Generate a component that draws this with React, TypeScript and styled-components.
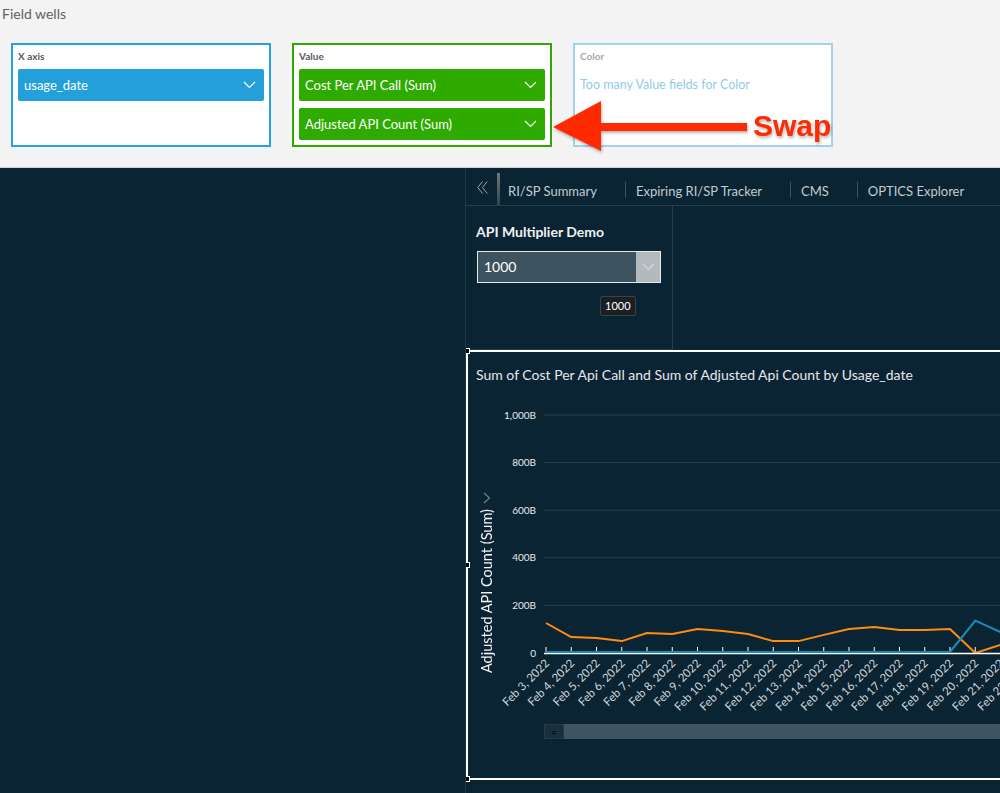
import React from "react";
import styled, { createGlobalStyle } from "styled-components";

const GlobalStyle = createGlobalStyle`
  *, *::before, *::after { box-sizing: border-box; }
  html, body { margin: 0; padding: 0; }
  body {
    width: 1000px;
    height: 793px;
    overflow: hidden;
    background: #0b2434;
    font-family: Lato, "Open Sans", sans-serif;
  }
`;

const Page = styled.div`
  position: relative;
  width: 1000px;
  height: 793px;
  display: flex;
  flex-direction: column;
  overflow: hidden;
`;

/* ---------- field wells ---------- */

const FieldWellsPanel = styled.section`
  height: 168px;
  flex-shrink: 0;
  background: #f3f3f3;
  border-bottom: 1px solid #cfd2d4;
  padding-top: 5px;
`;

const PanelTitle = styled.div`
  padding-left: 2px;
  font-size: 14px;
  line-height: 17px;
  color: #5f6266;
`;

const WellsRow = styled.div`
  display: flex;
  gap: 21px;
  margin-top: 21px;
  padding-left: 11px;
`;

const Well = styled.div<{ $border: string }>`
  width: 260px;
  height: 104px;
  background: #fff;
  border: 2px solid ${({ $border }) => $border};
  padding: 5px;
  display: flex;
  flex-direction: column;
  gap: 7px;
`;

const WellLabel = styled.div<{ $muted?: boolean }>`
  font-size: 10px;
  font-weight: 700;
  line-height: 12px;
  color: ${({ $muted }) => ($muted ? "#a7a9ab" : "#545b64")};
`;

const Pill = styled.div<{ $bg: string }>`
  height: 32px;
  border-radius: 2px;
  background: ${({ $bg }) => $bg};
  color: #fff;
  font-size: 13px;
  display: flex;
  align-items: center;
  justify-content: space-between;
  padding: 0 8px 0 6px;
`;

const Hint = styled.div`
  line-height: 32px;
  font-size: 12.5px;
  color: #8fcbe9;
`;

const SwapNote = styled.div`
  position: absolute;
  left: 553px;
  top: 101px;
  height: 50px;
  display: flex;
  align-items: center;
  gap: 6px;
  filter: drop-shadow(1px 2px 1.5px rgba(0, 0, 0, 0.3));
`;

const SwapText = styled.span`
  font-family: "Liberation Sans", Arial, sans-serif;
  font-weight: 700;
  font-size: 30px;
  line-height: 1;
  color: #ff2a00;
`;

/* ---------- dashboard ---------- */

const Dashboard = styled.div`
  flex: 1;
  display: flex;
  min-height: 0;
`;

const SidePane = styled.div`
  width: 466px;
  flex-shrink: 0;
  border-right: 1px solid #1e3949;
`;

const MainPane = styled.div`
  flex: 1;
  min-width: 0;
  display: flex;
  flex-direction: column;
  overflow: hidden;
`;

const TabBar = styled.div`
  height: 38px;
  flex-shrink: 0;
  display: flex;
  align-items: center;
  padding-top: 6px;
  border-bottom: 1px solid #23404f;
  white-space: nowrap;

  & > * {
    flex-shrink: 0;
  }
`;

const Collapse = styled.span`
  width: 31px;
  padding-left: 11px;
  display: flex;
  margin-top: -4px;
`;

const ActiveMark = styled.span`
  align-self: stretch;
  width: 3px;
  margin-top: -1px;
  background: linear-gradient(#6c7a82, #33444e);
`;

const Tab = styled.span<{ $first?: boolean }>`
  padding: 3px 28px 0 ${({ $first }) => ($first ? "8px" : "10px")};
  font-size: 13px;
  color: #c3cbd0;
`;

const Divider = styled.span`
  width: 1px;
  height: 16px;
  background: #3b5462;
`;

const ControlCard = styled.div`
  position: relative;
  width: 207px;
  height: 144px;
  flex-shrink: 0;
  border-right: 1px solid #23404f;
  border-bottom: 1px solid #23404f;
  padding: 17px 0 0 10px;
`;

const CardTitle = styled.div`
  font-size: 14px;
  font-weight: 700;
  line-height: 18px;
  color: #eef1f3;
`;

const Select = styled.div`
  margin: 10px 0 0 1px;
  width: 184px;
  height: 32px;
  display: flex;
  border: 1px solid #e6e9eb;
  background: #3e5360;
`;

const SelectValue = styled.span`
  flex: 1;
  padding-left: 6px;
  font-size: 14px;
  line-height: 30px;
  color: #fff;
`;

const SelectButton = styled.span`
  width: 24px;
  background: #b2babe;
  display: flex;
  align-items: center;
  justify-content: center;
`;

const Tooltip = styled.div`
  position: absolute;
  left: 134px;
  top: 90px;
  padding: 0 4px;
  height: 20px;
  line-height: 18px;
  font-size: 11px;
  color: #fff;
  background: #1b1f24;
  border: 1px solid #3c4248;
  border-radius: 2px;
`;

const Visual = styled.div`
  position: relative;
  width: 640px;
  height: 430px;
  flex-shrink: 0;
  border: 2px solid #fff;
`;

const Handle = styled.span<{ $pos: "top" | "mid" | "bottom" }>`
  position: absolute;
  left: -4px;
  width: 6px;
  height: 6px;
  background: #000;
  border: 1.5px solid #fff;
  top: ${({ $pos }) =>
    $pos === "top" ? "-4px" : $pos === "mid" ? "calc(50% - 3px)" : "calc(100% - 2px)"};
`;

const VisualTitle = styled.div`
  padding: 14px 0 0 8px;
  font-size: 14px;
  line-height: 18px;
  color: #e4e8eb;
  white-space: nowrap;
`;

const ChartBody = styled.div`
  display: flex;
  margin-top: 11px;
`;

const AxisTitleCol = styled.div`
  width: 37px;
  flex-shrink: 0;
  display: flex;
  flex-direction: column;
  align-items: center;
  gap: 5px;
  padding-top: 97px;
`;

const AxisTitle = styled.span`
  writing-mode: vertical-rl;
  transform: rotate(180deg);
  font-size: 14.5px;
  line-height: 15px;
  color: #f2f4f6;
  white-space: nowrap;
`;

const Scrollbar = styled.div`
  display: flex;
  height: 15px;
  margin: 9px 0 0 76px;
`;

const ScrollHandle = styled.span`
  width: 20px;
  background: #18303e;
  border: 1px solid #243c4a;
  display: flex;
  align-items: center;
  justify-content: center;
  font-size: 10px;
  line-height: 1;
  color: #05121a;
  font-weight: 700;
`;

const ScrollTrack = styled.span`
  flex: 1;
  background: #3e5561;
`;

const Chevron = ({ color = "#fff" }: { color?: string }) => (
  <svg width="13" height="8" viewBox="0 0 13 8">
    <polyline points="1,1 6.5,6.5 12,1" fill="none" stroke={color} strokeWidth="1.2" />
  </svg>
);

const DoubleChevron = () => (
  <svg width="11" height="13" viewBox="0 0 11 13">
    <polyline points="5.5,0.5 0.8,6.5 5.5,12.5" fill="none" stroke="#98a5ac" strokeWidth="1" />
    <polyline points="10.2,0.5 5.5,6.5 10.2,12.5" fill="none" stroke="#98a5ac" strokeWidth="1" />
  </svg>
);

const ArrowLeft = () => (
  <svg width="194" height="50" viewBox="0 0 194 50">
    <polygon points="0,26 48,0 48,22 194,22 194,30 48,30 48,50" fill="#ff2a00" />
  </svg>
);

const dates = Array.from({ length: 20 }, (_, i) => `Feb ${i + 3}, 2022`);
const orange = [126, 67, 63, 50, 84, 80, 101, 92, 80, 50, 50, 76, 101, 109, 97, 97, 101, 0, 34, 70];
const blue = [...Array(17).fill(4), 136, 88, 60];

const X0 = 41;
const STEP = 25.25;
const yOf = (v: number) => 258 - v * 0.238;
const path = (vals: number[]) =>
  vals.map((v, i) => `${i ? "L" : "M"}${(X0 + i * STEP).toFixed(1)},${yOf(v).toFixed(1)}`).join(" ");

const Plot = () => (
  <svg width="560" height="320" style={{ display: "block", flexShrink: 0, overflow: "visible" }}>
    {[0, 200, 400, 600, 800, 1000].map((v) => (
      <g key={v}>
        {v > 0 && <line x1="39" x2="560" y1={yOf(v)} y2={yOf(v)} stroke="#26404e" strokeWidth="1" />}
        <text
          x="31"
          y={yOf(v) + 3.5}
          textAnchor="end"
          fontSize="10"
          fill="#e6eaec"
          fontFamily="Lato, sans-serif"
        >
          {v === 0 ? "0" : v === 1000 ? "1,000B" : `${v}B`}
        </text>
      </g>
    ))}
    {dates.map((d, i) => {
      const x = X0 + i * STEP;
      return (
        <g key={d}>
          <line x1={x} x2={x} y1="252" y2="257" stroke="#fff" strokeWidth="1" />
          <text
            x={x + 4}
            y="269"
            textAnchor="end"
            fontSize="11.5"
            fill="#cfd6da"
            fontFamily="Lato, sans-serif"
            transform={`rotate(-45 ${x + 4} 269)`}
          >
            {d}
          </text>
        </g>
      );
    })}
    <path d={path(orange)} fill="none" stroke="#ff8b0f" strokeWidth="2" strokeLinejoin="round" />
    <line x1="39" x2="560" y1="258.5" y2="258.5" stroke="#fff" strokeWidth="1.5" />
    <path d={path(blue)} fill="none" stroke="#198cba" strokeWidth="2" strokeLinejoin="round" />
  </svg>
);

const App = () => (
  <>
    <GlobalStyle />
    <Page>
      <FieldWellsPanel>
        <PanelTitle>Field wells</PanelTitle>
        <WellsRow>
          <Well $border="#29a2db">
            <WellLabel>X axis</WellLabel>
            <Pill $bg="#23a0d9">
              usage_date
              <Chevron />
            </Pill>
          </Well>
          <Well $border="#31a800">
            <WellLabel>Value</WellLabel>
            <Pill $bg="#2eaa00">
              Cost Per API Call (Sum)
              <Chevron />
            </Pill>
            <Pill $bg="#2eaa00">
              Adjusted API Count (Sum)
              <Chevron />
            </Pill>
          </Well>
          <Well $border="#a0d2eb">
            <WellLabel $muted>Color</WellLabel>
            <Hint>Too many Value fields for Color</Hint>
          </Well>
        </WellsRow>
      </FieldWellsPanel>

      <SwapNote>
        <ArrowLeft />
        <SwapText>Swap</SwapText>
      </SwapNote>

      <Dashboard>
        <SidePane />
        <MainPane>
          <TabBar>
            <Collapse>
              <DoubleChevron />
            </Collapse>
            <ActiveMark />
            <Tab $first>RI/SP Summary</Tab>
            <Divider />
            <Tab>Expiring RI/SP Tracker</Tab>
            <Divider />
            <Tab>CMS</Tab>
            <Divider />
            <Tab>OPTICS Explorer</Tab>
          </TabBar>

          <ControlCard>
            <CardTitle>API Multiplier Demo</CardTitle>
            <Select>
              <SelectValue>1000</SelectValue>
              <SelectButton>
                <Chevron color="#d3d9dc" />
              </SelectButton>
            </Select>
            <Tooltip>1000</Tooltip>
          </ControlCard>

          <Visual>
            <Handle $pos="top" />
            <Handle $pos="mid" />
            <Handle $pos="bottom" />
            <VisualTitle>Sum of Cost Per Api Call and Sum of Adjusted Api Count by Usage_date</VisualTitle>
            <ChartBody>
              <AxisTitleCol>
                <svg width="8" height="12" viewBox="0 0 8 12">
                  <polyline points="1,1 6.5,6 1,11" fill="none" stroke="#6f808a" strokeWidth="1.2" />
                </svg>
                <AxisTitle>Adjusted API Count (Sum)</AxisTitle>
              </AxisTitleCol>
              <Plot />
            </ChartBody>
            <Scrollbar>
              <ScrollHandle>=</ScrollHandle>
              <ScrollTrack />
            </Scrollbar>
          </Visual>
        </MainPane>
      </Dashboard>
    </Page>
  </>
);

export default App;
